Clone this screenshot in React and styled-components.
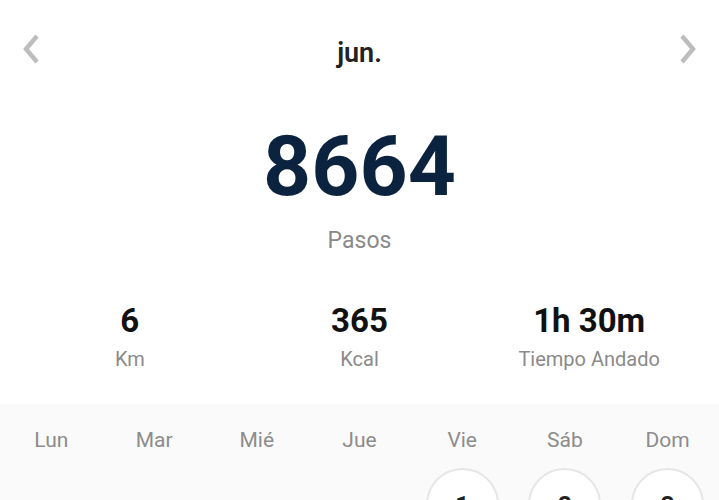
import React from "react";
import styled, { createGlobalStyle } from "styled-components";

const GlobalStyle = createGlobalStyle`
  html, body {
    margin: 0;
    padding: 0;
    background: #ffffff;
    font-family: Roboto, "Liberation Sans", sans-serif;
  }
  * {
    box-sizing: border-box;
  }
`;

const stats = [
  { value: "6", label: "Km" },
  { value: "365", label: "Kcal" },
  { value: "1h 30m", label: "Tiempo Andado" },
];

const days = ["Lun", "Mar", "Mié", "Jue", "Vie", "Sáb", "Dom"];
// first days of the month fall on Vie, Sáb, Dom
const dates = [null, null, null, null, 1, 2, 3];

const Chevron = ({ dir }) => (
  <svg width="20" height="32" viewBox="0 0 20 32" fill="none">
    <path
      d={dir === "left" ? "M16 3 L5 16 L16 29" : "M4 3 L15 16 L4 29"}
      stroke="#bdbdbd"
      strokeWidth="4.4"
    />
  </svg>
);

const App = () => {
  return (
    <Screen>
      <GlobalStyle />
      <Header>
        <NavButton>
          <Chevron dir="left" />
        </NavButton>
        <Month>jun.</Month>
        <NavButton>
          <Chevron dir="right" />
        </NavButton>
      </Header>

      <Hero>
        <Steps>8664</Steps>
        <StepsLabel>Pasos</StepsLabel>
      </Hero>

      <Stats>
        {stats.map((s) => (
          <Stat key={s.label}>
            <StatValue>{s.value}</StatValue>
            <StatLabel>{s.label}</StatLabel>
          </Stat>
        ))}
      </Stats>

      <Calendar>
        <WeekRow>
          {days.map((d) => (
            <DayName key={d}>{d}</DayName>
          ))}
        </WeekRow>
        <WeekRow>
          {dates.map((n, i) => (
            <DayCell key={i}>{n && <DayCircle>{n}</DayCircle>}</DayCell>
          ))}
        </WeekRow>
      </Calendar>
    </Screen>
  );
};

const Screen = styled.div`
  width: 719px;
  height: 500px;
  overflow: hidden;
  background: #ffffff;
`;

const Header = styled.div`
  height: 98px;
  display: flex;
  align-items: center;
  justify-content: space-between;
  padding: 0 21px 0 21px;
`;

const NavButton = styled.button`
  background: transparent;
  border: none;
  padding: 0;
  display: flex;
  align-items: center;
  cursor: pointer;
`;

const Month = styled.div`
  margin-top: 8px;
  font-size: 27px;
  line-height: 27px;
  font-weight: 600;
  color: #222222;
`;

const Hero = styled.div`
  display: flex;
  flex-direction: column;
  align-items: center;
  padding-top: 27px;
`;

const Steps = styled.div`
  font-size: 84px;
  line-height: 84px;
  font-weight: 700;
  color: #0c2340;
`;

const StepsLabel = styled.div`
  margin-top: 20px;
  font-size: 23px;
  line-height: 23px;
  color: #8a8a8a;
`;

const Stats = styled.div`
  display: grid;
  grid-template-columns: repeat(3, 1fr);
  padding: 52px 15px 35px;
`;

const Stat = styled.div`
  display: flex;
  flex-direction: column;
  align-items: center;
  gap: 12px;
`;

const StatValue = styled.div`
  font-size: 33px;
  line-height: 33px;
  font-weight: 700;
  color: #111111;
`;

const StatLabel = styled.div`
  font-size: 20px;
  line-height: 20px;
  color: #8a8a8a;
`;

const Calendar = styled.div`
  background: #fafafa;
  padding-top: 26px;
  display: flex;
  flex-direction: column;
  gap: 17px;
`;

const WeekRow = styled.div`
  display: grid;
  grid-template-columns: repeat(7, 1fr);
`;

const DayName = styled.div`
  text-align: center;
  font-size: 21px;
  line-height: 21px;
  color: #8c8c8c;
`;

const DayCell = styled.div`
  display: flex;
  justify-content: center;
`;

const DayCircle = styled.div`
  width: 73px;
  height: 73px;
  border-radius: 50%;
  border: 2px solid #e6e6e6;
  background: #ffffff;
  display: flex;
  align-items: center;
  justify-content: center;
  font-size: 24px;
  line-height: 1;
  font-weight: 700;
  color: #222222;
`;

export default App;
